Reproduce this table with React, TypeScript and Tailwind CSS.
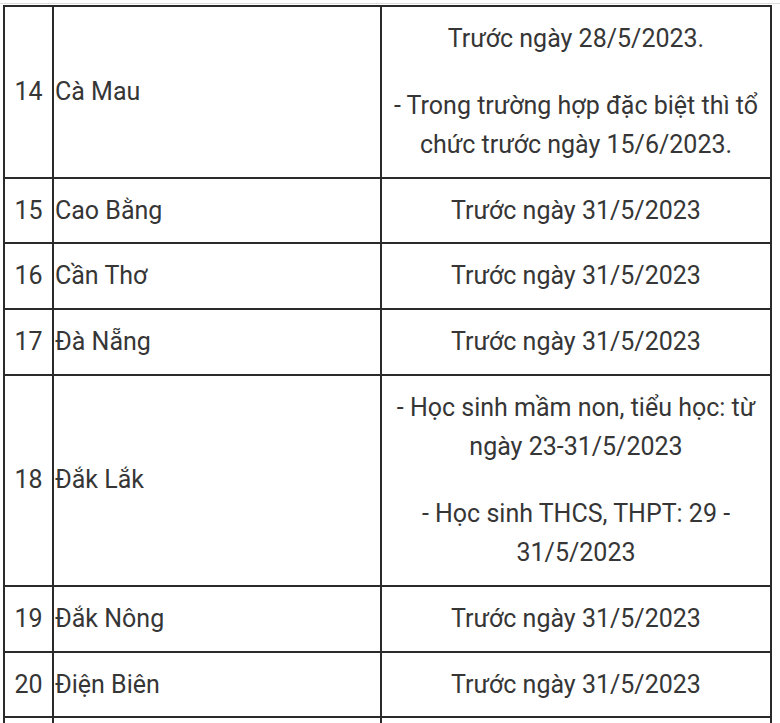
type Row = {
  no: number | null;
  name: string;
  // each paragraph is a list of lines (breaks as in the source)
  dates: string[][];
};

const rows: Row[] = [
  {
    no: 14,
    name: "Cà Mau",
    dates: [
      ["Trước ngày 28/5/2023."],
      ["- Trong trường hợp đặc biệt thì tổ", "chức trước ngày 15/6/2023."],
    ],
  },
  { no: 15, name: "Cao Bằng", dates: [["Trước ngày 31/5/2023"]] },
  { no: 16, name: "Cần Thơ", dates: [["Trước ngày 31/5/2023"]] },
  { no: 17, name: "Đà Nẵng", dates: [["Trước ngày 31/5/2023"]] },
  {
    no: 18,
    name: "Đắk Lắk",
    dates: [
      ["- Học sinh mầm non, tiểu học: từ", "ngày 23-31/5/2023"],
      ["- Học sinh THCS, THPT: 29 -", "31/5/2023"],
    ],
  },
  { no: 19, name: "Đắk Nông", dates: [["Trước ngày 31/5/2023"]] },
  { no: 20, name: "Điện Biên", dates: [["Trước ngày 31/5/2023"]] },
];

export default function App() {
  return (
    <div className="h-[723px] overflow-hidden bg-white pt-[3px] font-['Roboto',sans-serif] text-[25px] leading-[39.6px] text-[#363636]">
      <div className="h-px w-full bg-[#dcdcdc]" />
      <div className="ml-[3px] mt-px w-[769px] border-x-2 border-t-2 border-[#2a2a2a]">
        {rows.map((row) => (
          <div
            key={row.no}
            className="grid grid-cols-[49px_328px_1fr] border-b-2 border-[#2a2a2a]"
          >
            <div className="flex items-center justify-center border-r-2 border-[#2a2a2a] py-3">
              {row.no}
            </div>
            <div className="flex items-center border-r-2 border-[#2a2a2a] py-3 pl-px">
              {row.name}
            </div>
            <div className="flex flex-col gap-[27px] px-1 py-3 text-center">
              {row.dates.map((para, i) => (
                <p key={i} className="whitespace-nowrap">
                  {para.map((line, j) => (
                    <span key={j} className="block">
                      {line}
                    </span>
                  ))}
                </p>
              ))}
            </div>
          </div>
        ))}
        {/* next row, only its top edge shows in the frame */}
        <div className="grid h-[40px] grid-cols-[49px_328px_1fr]">
          <div className="border-r-2 border-[#2a2a2a]" />
          <div className="border-r-2 border-[#2a2a2a]" />
          <div />
        </div>
      </div>
    </div>
  );
}
